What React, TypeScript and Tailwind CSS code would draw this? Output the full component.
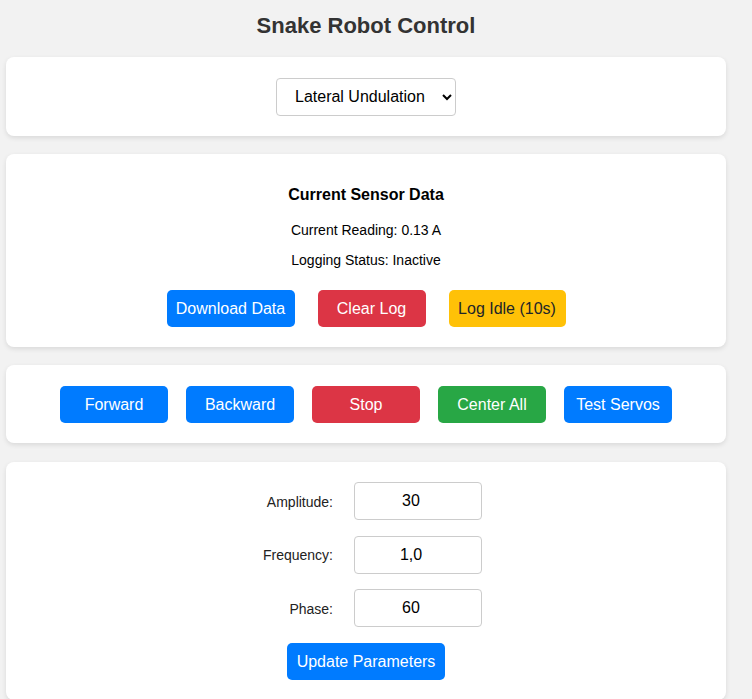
import React, { useState } from "react";

const card = "bg-white rounded-lg shadow-[0_2px_5px_rgba(0,0,0,0.1)]";
const btn = "h-[37px] rounded-[5px] text-[16px] leading-[18px] text-white pt-[1px]";

export default function App() {
  const [mode, setMode] = useState("lateral");
  const [params, setParams] = useState({ amplitude: "30", frequency: "1,0", phase: "60" });

  const rows: { key: keyof typeof params; label: string }[] = [
    { key: "amplitude", label: "Amplitude:" },
    { key: "frequency", label: "Frequency:" },
    { key: "phase", label: "Phase:" },
  ];

  return (
    <div className="min-h-[699px] bg-[#f2f2f2] font-['Liberation_Sans',Arial,sans-serif]">
      <div className="w-[720px] ml-[6px] pt-[13px]">
        <h1 className="h-[26px] text-center text-[22px] leading-[26px] font-bold text-[#333]">
          Snake Robot Control
        </h1>

        {/* mode select */}
        <div className={`${card} mt-[18px] h-[79px] flex items-center justify-center`}>
          <select
            value={mode}
            onChange={(e) => setMode(e.target.value)}
            className="w-[180px] h-[38px] pl-[14px] pr-[8px] border border-[#ccc] rounded-[4px] bg-white text-[16px] text-black"
          >
            <option value="lateral">Lateral Undulation</option>
            <option value="sidewinding">Sidewinding</option>
            <option value="concertina">Concertina</option>
          </select>
        </div>

        {/* sensor data */}
        <div className={`${card} mt-[18px] h-[193px] pt-[31px] flex flex-col items-center`}>
          <h3 className="h-[19px] leading-[19px] text-[16px] font-bold text-black">Current Sensor Data</h3>
          <p className="mt-[18px] h-[16px] leading-[16px] text-[14px] text-black">Current Reading: 0.13 A</p>
          <p className="mt-[14px] h-[16px] leading-[16px] text-[14px] text-black">Logging Status: Inactive</p>
          <div className="mt-[22px] flex gap-[23px]">
            <button className={`${btn} w-[128px] bg-[#007bff]`}>Download Data</button>
            <button className={`${btn} w-[108px] bg-[#dc3545]`}>Clear Log</button>
            <button className={`${btn} w-[117px] bg-[#ffc107] !text-[#212529]`}>Log Idle (10s)</button>
          </div>
        </div>

        {/* movement */}
        <div className={`${card} mt-[18px] h-[78px] flex items-center justify-center gap-[18px] pl-[-1px]`}>
          <button className={`${btn} w-[108px] bg-[#007bff]`}>Forward</button>
          <button className={`${btn} w-[108px] bg-[#007bff]`}>Backward</button>
          <button className={`${btn} w-[108px] bg-[#dc3545]`}>Stop</button>
          <button className={`${btn} w-[108px] bg-[#28a745]`}>Center All</button>
          <button className={`${btn} w-[108px] bg-[#007bff]`}>Test Servos</button>
        </div>

        {/* parameters */}
        <div className={`${card} mt-[19px] pt-[20px] pb-[20px] flex flex-col items-center gap-[15.5px]`}>
          {rows.map((r) => (
            <div key={r.key} className="flex items-center">
              <label className="w-[100px] pt-[2px] text-right text-[14px] text-[#222]">{r.label}</label>
              <input
                value={params[r.key]}
                onChange={(e) => setParams({ ...params, [r.key]: e.target.value })}
                className="ml-[21px] mr-[17px] w-[128px] h-[38px] pr-[14px] border border-[#ccc] rounded-[4px] text-center text-[16px] text-black outline-none"
              />
            </div>
          ))}
          <button className={`${btn} w-[158px] bg-[#007bff]`}>Update Parameters</button>
        </div>
      </div>
    </div>
  );
}
